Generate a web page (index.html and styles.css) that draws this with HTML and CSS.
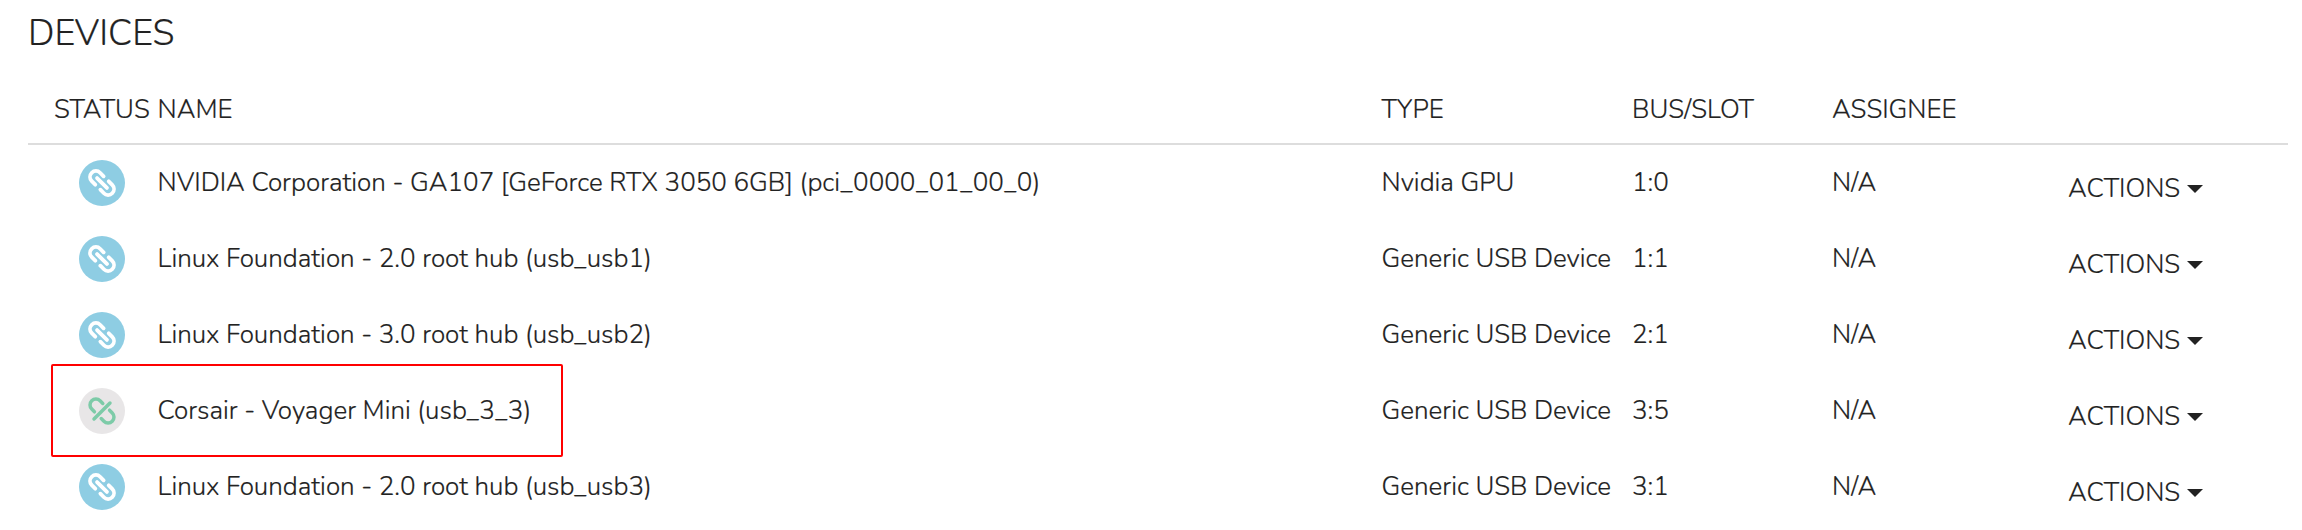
FILE: index.html
```html
<!DOCTYPE html>
<html lang="en">
<head>
<meta charset="utf-8">
<title>Devices</title>
<link rel="stylesheet" href="styles.css">
</head>
<body>
<svg class="defs" aria-hidden="true">
  <symbol id="linked" viewBox="0 0 46 46">
    <circle cx="23" cy="23" r="23" fill="#8ecde3"/>
    <g transform="translate(23 23) rotate(45)" fill="none" stroke="#fff" stroke-width="3.8" stroke-linecap="round">
      <path d="M-3.6 -5.9H-8.6A5.9 5.9 0 0 0 -8.6 5.9H-3.6M3.6 -5.9H8.6A5.9 5.9 0 0 1 8.6 5.9H3.6M-7 0H7"/>
    </g>
  </symbol>
  <symbol id="unlinked" viewBox="0 0 46 46">
    <circle cx="23" cy="23" r="23" fill="#e8e6e7"/>
    <g transform="translate(23 23) rotate(45)" fill="none" stroke="#7dcba8" stroke-width="3.5" stroke-linecap="round">
      <path d="M-4.8 -5.9H-8.6A5.9 5.9 0 0 0 -8.6 5.9H-4.8M4.8 -5.9H8.6A5.9 5.9 0 0 1 8.6 5.9H4.8M0 -11.3V11.3"/>
    </g>
  </symbol>
</svg>
<main class="devices">
  <h1 class="title">DEVICES</h1>
  <div class="row head">
    <span>STATUS</span><span>NAME</span><span>TYPE</span><span>BUS/SLOT</span><span>ASSIGNEE</span>
  </div>
  <div class="row">
    <svg class="status"><use href="#linked"/></svg>
    <span>NVIDIA Corporation - GA107 [GeForce RTX 3050 6GB] (pci_0000_01_00_0)</span>
    <span>Nvidia GPU</span><span>1:0</span><span>N/A</span>
    <span class="actions">ACTIONS<i class="caret"></i></span>
  </div>
  <div class="row">
    <svg class="status"><use href="#linked"/></svg>
    <span>Linux Foundation - 2.0 root hub (usb_usb1)</span>
    <span>Generic USB Device</span><span>1:1</span><span>N/A</span>
    <span class="actions">ACTIONS<i class="caret"></i></span>
  </div>
  <div class="row">
    <svg class="status"><use href="#linked"/></svg>
    <span>Linux Foundation - 3.0 root hub (usb_usb2)</span>
    <span>Generic USB Device</span><span>2:1</span><span>N/A</span>
    <span class="actions">ACTIONS<i class="caret"></i></span>
  </div>
  <div class="row marked">
    <svg class="status"><use href="#unlinked"/></svg>
    <span>Corsair - Voyager Mini (usb_3_3)</span>
    <span>Generic USB Device</span><span>3:5</span><span>N/A</span>
    <span class="actions">ACTIONS<i class="caret"></i></span>
  </div>
  <div class="row">
    <svg class="status"><use href="#linked"/></svg>
    <span>Linux Foundation - 2.0 root hub (usb_usb3)</span>
    <span>Generic USB Device</span><span>3:1</span><span>N/A</span>
    <span class="actions">ACTIONS<i class="caret"></i></span>
  </div>
</main>
</body>
</html>
```
FILE: styles.css
```css
body {
  margin: 0;
  background: #fff;
  color: #222;
  font: 300 26px/36px Nunito, "Open Sans", sans-serif;
  -webkit-text-stroke: 0.2px #222;
}
.defs { position: absolute; width: 0; height: 0; }
.devices { padding: 9px 14px 0 28px; height: 521px; overflow: hidden; }
.title { margin: 0 0 17px; font-size: 36px; font-weight: 300; line-height: 50px; }
.row {
  display: grid;
  grid-template-columns: 103.5px 1224px 250.5px 200px 236px 1fr;
  align-items: center;
  height: 76px;
  padding-left: 26px;
  white-space: nowrap;
  position: relative;
}
.head { height: 67px; border-bottom: 2px solid #ddd; }
.status { display: block; width: 46px; height: 46px; margin-left: 25px; }
.actions { display: flex; align-items: center; gap: 7px; padding-top: 12px; }
.caret {
  border: 8px solid transparent;
  border-top-color: #222;
  border-bottom: 0;
}
.marked::before {
  content: "";
  position: absolute;
  left: 23px;
  top: -9px;
  width: 508px;
  height: 89px;
  border: 2px solid #f00;
  border-radius: 2px;
}
```
